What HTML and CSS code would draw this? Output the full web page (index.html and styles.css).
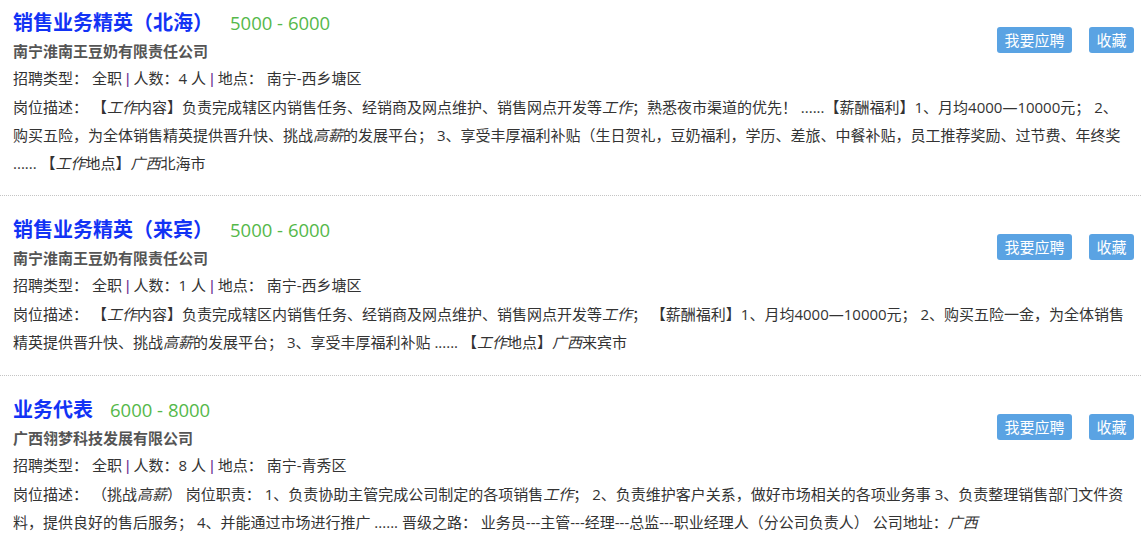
FILE: index.html
```html
<!DOCTYPE html>
<html lang="zh-CN">
<head>
<meta charset="utf-8">
<title>职位列表</title>
<link rel="stylesheet" href="styles.css">
</head>
<body>
<div class="list">
  <div class="job">
    <div class="actions"><a class="btn">我要应聘</a><a class="btn">收藏</a></div>
    <div class="head"><a class="title">销售业务精英（北海）</a><span class="salary">5000 - 6000</span></div>
    <div class="company">南宁淮南王豆奶有限责任公司</div>
    <div class="info">招聘类型： 全职 <span class="sep">|</span> 人数：4 人 <span class="sep">|</span> 地点： 南宁-西乡塘区</div>
    <div class="desc">岗位描述： 【<i>工作</i>内容】负责完成辖区内销售任务、经销商及网点维护、销售网点开发等<i>工作</i>；熟悉夜市渠道的优先！ ......【薪酬福利】1、月均4000—10000元； 2、<br>购买五险，为全体销售精英提供晋升快、挑战<i>高薪</i>的发展平台； 3、享受丰厚福利补贴（生日贺礼，豆奶福利，学历、差旅、中餐补贴，员工推荐奖励、过节费、年终奖<br>...... 【<i>工作</i>地点】<i>广西</i>北海市</div>
  </div>
  <div class="job">
    <div class="actions"><a class="btn">我要应聘</a><a class="btn">收藏</a></div>
    <div class="head"><a class="title">销售业务精英（来宾）</a><span class="salary">5000 - 6000</span></div>
    <div class="company">南宁淮南王豆奶有限责任公司</div>
    <div class="info">招聘类型： 全职 <span class="sep">|</span> 人数：1 人 <span class="sep">|</span> 地点： 南宁-西乡塘区</div>
    <div class="desc">岗位描述： 【<i>工作</i>内容】负责完成辖区内销售任务、经销商及网点维护、销售网点开发等<i>工作</i>； 【薪酬福利】1、月均4000—10000元； 2、购买五险一金，为全体销售<br>精英提供晋升快、挑战<i>高薪</i>的发展平台； 3、享受丰厚福利补贴 ...... 【<i>工作</i>地点】<i>广西</i>来宾市</div>
  </div>
  <div class="job">
    <div class="actions"><a class="btn">我要应聘</a><a class="btn">收藏</a></div>
    <div class="head"><a class="title">业务代表</a><span class="salary">6000 - 8000</span></div>
    <div class="company">广西翎梦科技发展有限公司</div>
    <div class="info">招聘类型： 全职 <span class="sep">|</span> 人数：8 人 <span class="sep">|</span> 地点： 南宁-青秀区</div>
    <div class="desc">岗位描述： （挑战<i>高薪</i>） 岗位职责： 1、负责协助主管完成公司制定的各项销售<i>工作</i>； 2、负责维护客户关系，做好市场相关的各项业务事 3、负责整理销售部门文件资<br>料，提供良好的售后服务； 4、并能通过市场进行推广 ...... 晋级之路： 业务员---主管---经理---总监---职业经理人（分公司负责人） 公司地址：<i>广西</i></div>
  </div>
</div>
</body>
</html>
```
FILE: styles.css
```css
html, body {
  margin: 0;
  padding: 0;
  background: #ffffff;
}
body {
  font-family: "Open Sans", "Noto Sans CJK SC", sans-serif;
  font-size: 15px;
  color: #333333;
}
.job {
  padding: 19px 7px 19px 13px;
  border-bottom: 1px dotted #c4c4c4;
}
.job:first-child {
  padding-top: 8px;
  padding-bottom: 18px;
}
.actions {
  float: right;
  display: flex;
  gap: 17px;
  margin-top: 19px;
}
.btn {
  display: block;
  height: 26px;
  line-height: 26px;
  padding: 0 7.5px;
  background: #5aa3e3;
  color: #ffffff;
  border-radius: 3px;
  font-size: 15px;
}
.head {
  display: flex;
  align-items: baseline;
  height: 30px;
  line-height: 30px;
}
.title {
  font-size: 20px;
  font-weight: bold;
  color: #1233f5;
}
.salary {
  margin-left: 17px;
  font-size: 18.5px;
  color: #55b84a;
}
.company {
  font-weight: bold;
  color: #555555;
  line-height: 26px;
}
.info {
  line-height: 28px;
}
.sep {
  font-family: "Liberation Sans", sans-serif;
  color: #6b2c91;
}
.desc {
  line-height: 28px;
}
.desc i {
  font-style: italic;
}
```
